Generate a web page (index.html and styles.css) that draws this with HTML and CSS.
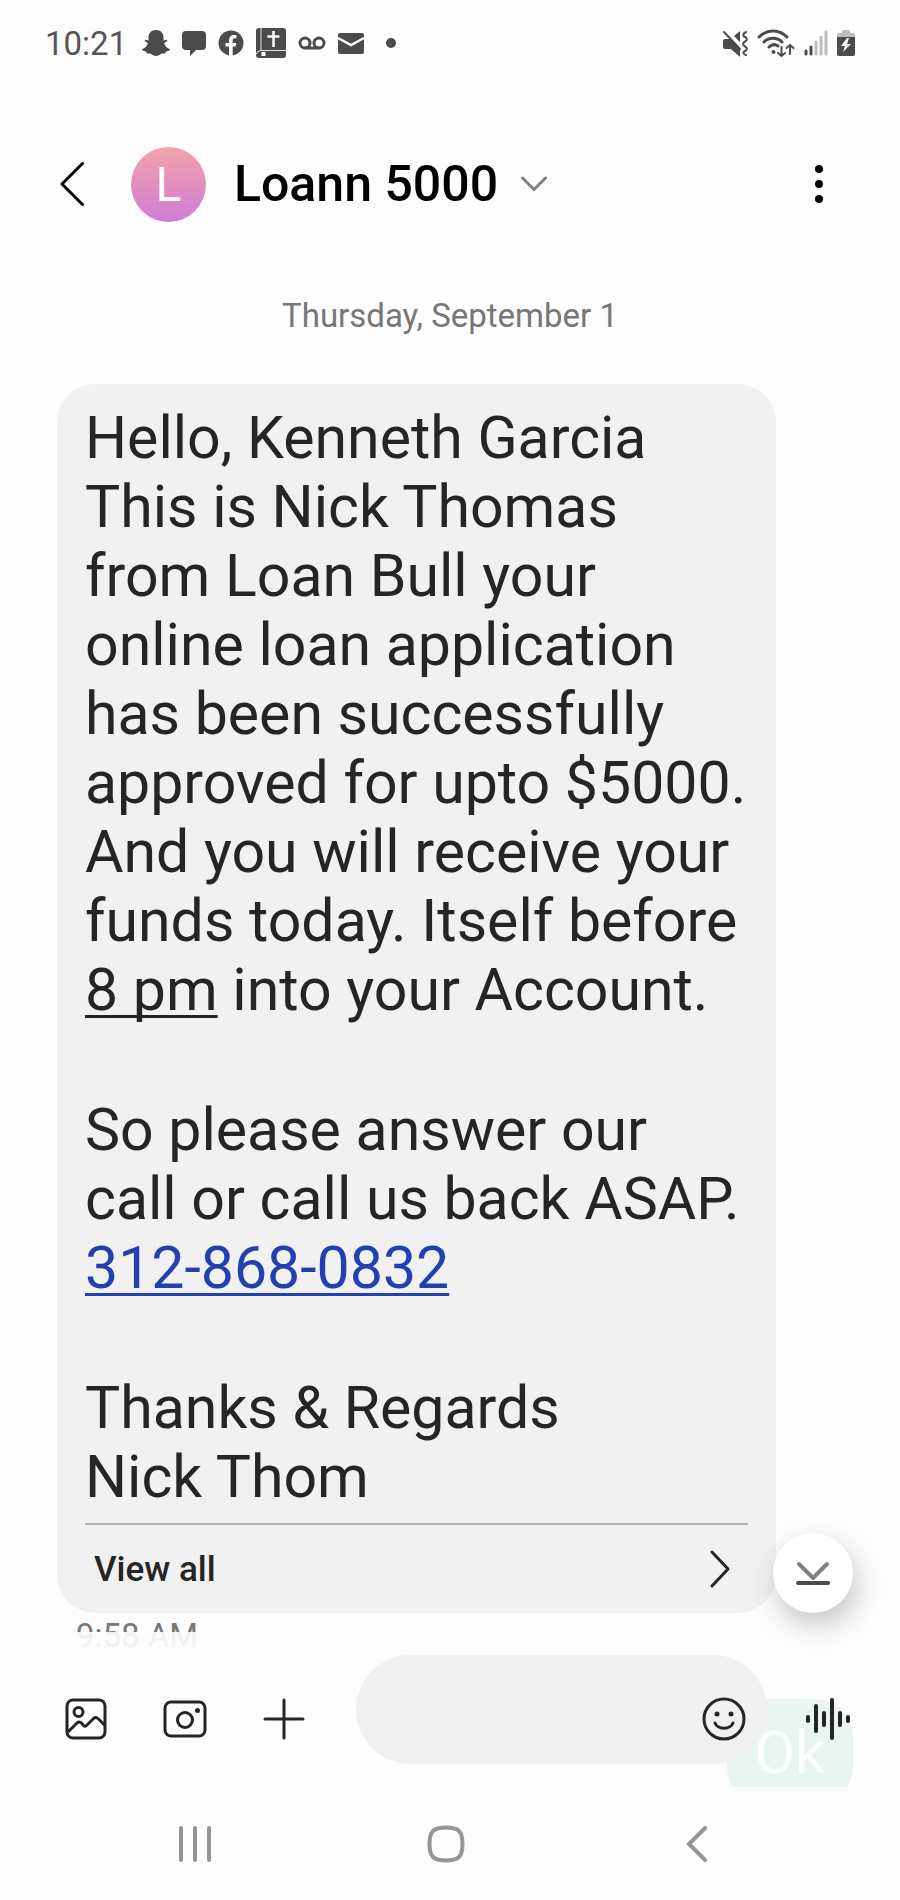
FILE: index.html
```
<!DOCTYPE html>
<html lang="en">
<head>
    <meta charset="UTF-8">
    <meta name="viewport" content="width=device-width, initial-scale=1.0">
    <title>Loann 5000</title>
    <link rel="stylesheet" href="styles.css">
</head>
<body>

    <div class="status-bar">
        <span class="clock">10:21</span>
        <div class="status-icons">
            <!-- snapchat -->
            <svg width="28" height="28" viewBox="0 0 28 28" fill="#4b4b4b">
                <path d="M14 1c5 0 7.500 3.500 7.500 7.500v3l2.500-.8c1.300-.2 1.800 1 .7 1.700l-2.500 1.600c.8 3 2.500 4.800 5.200 6 .9.500.5 1.500-.4 1.800l-3 .8-.8 2-3.700-.1c-1.800 1.200-3.400 2.500-5.500 2.500s-3.700-1.300-5.500-2.500l-3.700.1-.8-2-3-.8c-.9-.3-1.300-1.300-.4-1.800 2.700-1.200 4.400-3 5.200-6l-2.500-1.600c-1.100-.7-.6-1.900.7-1.700l2.500.8v-3C6.500 4.500 9 1 14 1z"/>
            </svg>
            <!-- messages -->
            <svg width="26" height="28" viewBox="0 0 26 28" fill="#4b4b4b">
                <path d="M5 2h16q4 0 4 4v11q0 4-4 4h-6l-6 6v-6H5q-4 0-4-4V6q0-4 4-4z"/>
            </svg>
            <!-- facebook -->
            <svg width="26" height="28" viewBox="0 0 26 28">
                <circle cx="13" cy="14" r="12.500" fill="#4b4b4b"/>
                <path d="M11 27V17.500H7.500V14H11v-2.500c0-3.500 2-5.500 5.200-5.500l2.300.2v3.100h-1.800c-1.600 0-2 .9-2 2V14h3.600l-.6 3.500h-3V27z" fill="#fdfdfd"/>
            </svg>
            <!-- bible -->
            <svg width="32" height="32" viewBox="0 0 32 32">
                <path d="M4 1h24q3 0 3 3v24q0 3-3 3H4q-3 0-3-3V4q0-3 3-3z" fill="#4b4b4b"/>
                <path d="M6 1v22M31 23.500H6q-4 0-5 4" stroke="#dedede" stroke-width="1" fill="none"/>
                <path d="M18.500 4v16M12.500 9.500h12" stroke="#fdfdfd" stroke-width="2.500"/>
                <path d="M6.500 25h4v4h-4z" fill="#fdfdfd"/>
            </svg>
            <!-- voicemail -->
            <svg width="28" height="28" viewBox="0 0 28 28" fill="none" stroke="#4b4b4b" stroke-width="3">
                <circle cx="7" cy="14" r="5"/>
                <circle cx="21" cy="14" r="5"/>
                <path d="M7 19h14"/>
            </svg>
            <!-- mail -->
            <svg width="28" height="28" viewBox="0 0 28 28">
                <rect x="1" y="4" width="26" height="21" rx="2" fill="#4b4b4b"/>
                <path d="M1 9l13 7 13-7" fill="none" stroke="#fdfdfd" stroke-width="2.500"/>
            </svg>
            <svg class="more-dot" width="10" height="10" viewBox="0 0 10 10"><circle cx="5" cy="5" r="5" fill="#4b4b4b"/></svg>
        </div>
        <div class="system-icons">
            <!-- vibrate / muted -->
            <svg width="26" height="28" viewBox="0 0 26 28">
                <path d="M1 12q0-2 2-2h5l10 10v8L9 20H3q-2 0-2-2zM12 7l6-5v11z" fill="#4b4b4b"/>
                <path d="M2 3l16 17" stroke="#4b4b4b" stroke-width="2" stroke-linecap="round"/>
                <path d="M24 3c-4 2-3 4-1 5s3 3 0 4.500-2 4 0 5 3 3 0 4.500-1 3.500 1 4" fill="none" stroke="#4b4b4b" stroke-width="2" stroke-linecap="round"/>
            </svg>
            <!-- wifi -->
            <svg width="38" height="30" viewBox="0 0 38 30" fill="none" stroke="#4b4b4b" stroke-width="3" stroke-linecap="round">
                <path d="M2 9C10 1 22 1 30 9M7 14c5-5 13-5 18 0M12 19c3-3 6-3 9-1"/>
                <circle cx="16.500" cy="24" r="2" fill="#4b4b4b" stroke="none"/>
                <path d="M24.500 19v9M21 25l3.500 3 3.500-3M33 26v-9M29.500 20l3.500-3 3.500 3" stroke-width="2"/>
            </svg>
            <!-- signal -->
            <svg width="24" height="28" viewBox="0 0 24 28" stroke-width="3" stroke-linecap="round">
                <path d="M2 22v3M7 18v7" stroke="#4b4b4b"/>
                <path d="M12 13v12M17 8v17M22 3v22" stroke="#bdbdbd"/>
            </svg>
            <!-- battery -->
            <svg width="18" height="28" viewBox="0 0 18 28">
                <path d="M5 3q0-2 2-2h4q2 0 2 2v1h3q2 0 2 2v3H0V6q0-2 2-2h3z" fill="#bdbdbd"/>
                <path d="M0 8h18v17q0 2-2 2H2q-2 0-2-2z" fill="#4b4b4b"/>
                <path d="M10 9l-6 8h4l-2 6 8-8h-4l2-6z" fill="#fdfdfd"/>
            </svg>
        </div>
    </div>

    <header class="chat-header">
        <button class="back-btn" aria-label="Back">
            <svg width="26" height="46" viewBox="0 0 26 46" fill="none" stroke="#000" stroke-width="3" stroke-linecap="round" stroke-linejoin="round">
                <path d="M23.500 2.500L3 23l20.500 20.500"/>
            </svg>
        </button>
        <div class="avatar">L</div>
        <h1>Loann 5000</h1>
        <button class="details-btn" aria-label="Contact details">
            <svg width="28" height="18" viewBox="0 0 28 18" fill="none" stroke="#808080" stroke-width="3" stroke-linecap="round" stroke-linejoin="round">
                <path d="M2.500 3L14 14.500 25.500 3"/>
            </svg>
        </button>
        <button class="menu-btn" aria-label="More options">
            <svg width="8" height="38" viewBox="0 0 8 38">
                <circle cx="4" cy="4" r="4"/>
                <circle cx="4" cy="19" r="4"/>
                <circle cx="4" cy="34" r="4"/>
            </svg>
        </button>
    </header>

    <main class="thread">
        <div class="date">Thursday, September 1</div>

        <div class="bubble received">
            <p>Hello, Kenneth Garcia<br>This is Nick Thomas from Loan Bull your online loan application has been successfully approved for upto $5000. And you will receive your funds today. Itself before <span class="when">8 pm</span> into your Account.</p>
            <p>So please answer our call or call us back ASAP. <a href="tel:3128680832">312-868-0832</a></p>
            <p>Thanks &amp; Regards<br>Nick Thom</p>
            <button class="view-all">
                View all
                <svg width="20" height="38" viewBox="0 0 20 38" fill="none" stroke="#252525" stroke-width="3" stroke-linecap="round" stroke-linejoin="round">
                    <path d="M2 2l16 17L2 36"/>
                </svg>
            </button>
        </div>
        <div class="time">9:58 AM</div>
        <div class="bubble sent">Ok</div>

        <form class="composer">
            <button type="button" class="tool-btn" aria-label="Gallery">
                <svg width="42" height="42" viewBox="0 0 42 42" fill="none" stroke="#252525" stroke-width="3" stroke-linejoin="round">
                    <rect x="2" y="2" width="38" height="38" rx="6"/>
                    <circle cx="13.500" cy="14" r="4.500"/>
                    <path d="M3 34l9-9q2.500-2 4.500 0l2 2.500q1.500 1.500 3 0l7-7q2.500-2 4.500 0l7 7"/>
                </svg>
            </button>
            <button type="button" class="tool-btn" aria-label="Camera">
                <svg width="44" height="38" viewBox="0 0 44 38" fill="none" stroke="#252525" stroke-width="3">
                    <rect x="2" y="2" width="40" height="34" rx="6"/>
                    <circle cx="22" cy="20" r="7.500"/>
                    <circle cx="34.500" cy="10.500" r="2.500" fill="#252525" stroke="none"/>
                </svg>
            </button>
            <button type="button" class="tool-btn" aria-label="Add">
                <svg width="42" height="42" viewBox="0 0 42 42" stroke="#252525" stroke-width="3" stroke-linecap="round">
                    <path d="M21 2v38M2 21h38"/>
                </svg>
            </button>
            <div class="field">
                <input type="text" aria-label="Message">
                <button type="button" class="emoji-btn" aria-label="Emoji">
                    <svg width="44" height="44" viewBox="0 0 44 44" fill="none" stroke="#252525" stroke-width="3" stroke-linecap="round">
                        <circle cx="22" cy="22" r="20"/>
                        <path d="M13 26c3 7 15 7 18 0"/>
                        <circle cx="15" cy="17" r="2.500" fill="#252525" stroke="none"/>
                        <circle cx="29" cy="17" r="2.500" fill="#252525" stroke="none"/>
                    </svg>
                </button>
            </div>
            <button type="button" class="voice-btn" aria-label="Voice message">
                <svg width="44" height="42" viewBox="0 0 44 42" stroke="#252525" stroke-width="4" stroke-linecap="round">
                    <path d="M2 19v4M10 8v25M18 15v12M26 2v38M34 15v12M42 19v4"/>
                </svg>
            </button>
        </form>

        <button class="scroll-btn" aria-label="Scroll to latest">
            <svg width="34" height="26" viewBox="0 0 34 26" fill="none" stroke-width="4" stroke-linecap="round" stroke-linejoin="round">
                <path d="M3 4l14 14L31 4" stroke="#808080"/>
                <path d="M2 23h30" stroke="#4b4b4b"/>
            </svg>
        </button>
    </main>

    <nav class="nav-bar">
        <button aria-label="Recent apps">
            <svg width="36" height="42" viewBox="0 0 36 42" stroke="#959595" stroke-width="4" stroke-linecap="round">
                <path d="M4 5v32M18 5v32M32 5v32"/>
            </svg>
        </button>
        <button aria-label="Home">
            <svg width="40" height="40" viewBox="0 0 40 40" fill="none" stroke="#959595" stroke-width="4">
                <path d="M20 3.500c12 0 16.500 3 16.500 16.500S32 36.500 20 36.500 3.500 33.500 3.500 20 8 3.500 20 3.500z"/>
            </svg>
        </button>
        <button aria-label="Back">
            <svg width="22" height="42" viewBox="0 0 22 42" fill="none" stroke="#959595" stroke-width="4" stroke-linecap="round">
                <path d="M19 5L3 21l16 16"/>
            </svg>
        </button>
    </nav>

</body>
</html>
```
FILE: styles.css
```
* {
    box-sizing: border-box;
}

body {
    margin: 0;
    height: 100vh;
    display: flex;
    flex-direction: column;
    background-color: #fdfdfd;
    color: #252525;
    font-family: Roboto, "Liberation Sans", sans-serif;
}

button {
    padding: 0;
    border: none;
    background: none;
    color: inherit;
    font-family: inherit;
    cursor: pointer;
}

svg {
    display: block;
}

/* Status bar */
.status-bar {
    height: 86px;
    padding: 0 45px;
    display: flex;
    align-items: center;
    flex-shrink: 0;
}

.clock {
    color: #555;
    font-size: 33px;
}

.status-icons {
    display: flex;
    align-items: center;
    gap: 11px;
    margin-left: 15px;
}

.more-dot {
    margin-left: 10px;
}

.system-icons {
    display: flex;
    align-items: center;
    gap: 9px;
    margin-left: auto;
}

/* Header */
.chat-header {
    height: 196px;
    padding: 0 77px 0 59px;
    display: flex;
    align-items: center;
    flex-shrink: 0;
}

.avatar {
    width: 75px;
    height: 75px;
    margin: 0 28px 0 46px;
    border-radius: 50%;
    background: linear-gradient(#f3a2ab, #d07cd4);
    color: #fff;
    font-size: 48px;
    line-height: 75px;
    text-align: center;
}

h1 {
    margin: 0;
    color: #000;
    font-size: 50px;
    font-weight: 500;
}

.details-btn {
    margin-left: 22px;
}

.menu-btn {
    margin-left: auto;
}

/* Conversation */
.thread {
    position: relative;
    flex: 1;
    min-height: 0;
    padding: 14px 47px 0;
    display: flex;
    flex-direction: column;
    overflow: hidden;
}

.date {
    margin-bottom: 48px;
    color: #777;
    font-size: 33px;
    line-height: 40px;
    text-align: center;
}

.bubble {
    padding: 19px 28px 18px;
    border-radius: 38px;
    font-size: 59px;
    line-height: 69px;
    flex-shrink: 0;
}

.received {
    margin: 0 77px 0 10px;
    padding-bottom: 0;
    background-color: #f1f1f1;
}

.received p {
    margin: 0 0 71px;
}

.received p:last-of-type {
    margin-bottom: 12px;
}

.when,
.received a {
    text-decoration: underline;
    text-decoration-thickness: 3px;
    text-decoration-skip-ink: none;
    text-underline-offset: 5px;
}

.received a {
    color: #2340b0;
}

.view-all {
    width: 100%;
    height: 90px;
    padding: 0 18px 0 9px;
    display: flex;
    align-items: center;
    justify-content: space-between;
    border-top: 2px solid #b4b6b4;
    font-size: 35px;
    font-weight: 500;
}

.time {
    margin: 3px 0 43px 29px;
    color: #777;
    font-size: 33px;
    line-height: 40px;
}

.sent {
    align-self: flex-end;
    background-color: #109973;
    color: #fff;
}

.scroll-btn {
    position: absolute;
    right: 47px;
    bottom: 174px;
    width: 80px;
    height: 80px;
    display: flex;
    align-items: center;
    justify-content: center;
    border-radius: 50%;
    background-color: #fff;
    box-shadow: 4px 12px 28px rgba(0, 0, 0, 0.22);
}

/* Composer lies over the end of the conversation */
.composer {
    position: absolute;
    left: 0;
    right: 0;
    bottom: 0;
    height: 155px;
    padding: 23px 35px 0 36px;
    display: flex;
    align-items: flex-start;
    background-color: rgba(253, 253, 253, 0.92);
}

.tool-btn,
.voice-btn {
    height: 128px;
    display: flex;
    align-items: center;
    justify-content: center;
    flex-shrink: 0;
}

.tool-btn {
    width: 99px;
}

.voice-btn {
    width: 74px;
}

.field {
    flex: 1;
    min-width: 0;
    height: 109px;
    margin: 0 24px 0 23px;
    padding: 19px 21px 0 44px;
    display: flex;
    align-items: center;
    border-radius: 55px;
    background-color: #f1f1f1;
}

.field input {
    flex: 1;
    min-width: 0;
    border: none;
    outline: none;
    background: none;
    font-family: inherit;
    font-size: 33px;
}

/* System navigation */
.nav-bar {
    height: 113px;
    padding: 0 78px 0 69px;
    display: grid;
    grid-template-columns: repeat(3, 1fr);
    flex-shrink: 0;
}

.nav-bar button {
    display: flex;
    align-items: center;
    justify-content: center;
}
```
